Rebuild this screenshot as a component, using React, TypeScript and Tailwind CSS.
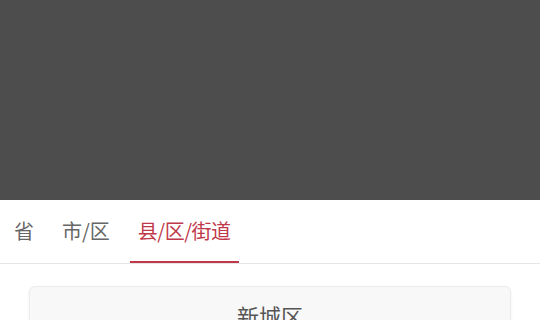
import { useState } from 'react';

const TABS = ['省', '市/区', '县/区/街道'];
const AREAS = ['新城区', '碑林区', '莲湖区'];

export default function App() {
  const [active, setActive] = useState(2);
  return (
    <div
      className="relative w-[540px] h-[320px] overflow-hidden bg-white"
      style={{ fontFamily: '"Noto Sans CJK SC", "Noto Sans", sans-serif' }}
    >
      {/* mask */}
      <div className="h-[200px] bg-[#4d4d4d]" />

      {/* picker panel */}
      <div className="bg-white">
        <div className="flex items-stretch gap-3 pl-[6px] border-b border-[#e6e6e6]">
          {TABS.map((tab, i) => (
            <button
              key={tab}
              onClick={() => setActive(i)}
              className={
                i === active
                  ? 'h-[63px] px-2 flex items-center text-[20px] tracking-[-0.5px] text-[#c0394b] border-b-2 border-[#c0394b]'
                  : 'h-[63px] px-2 flex items-center text-[20px] text-[#666666] border-b-2 border-transparent'
              }
            >
              {tab}
            </button>
          ))}
        </div>

        <div className="flex flex-col gap-3 px-[29px] pt-[22px]">
          {AREAS.map((area) => (
            <div
              key={area}
              className="rounded-md bg-[#f8f8f8] border border-[#ececec] shadow-[0_1px_3px_rgba(0,0,0,0.06)] pt-[13px] pb-4 text-center text-[22px] leading-[30px] text-[#555555]"
            >
              {area}
            </div>
          ))}
        </div>
      </div>
    </div>
  );
}
